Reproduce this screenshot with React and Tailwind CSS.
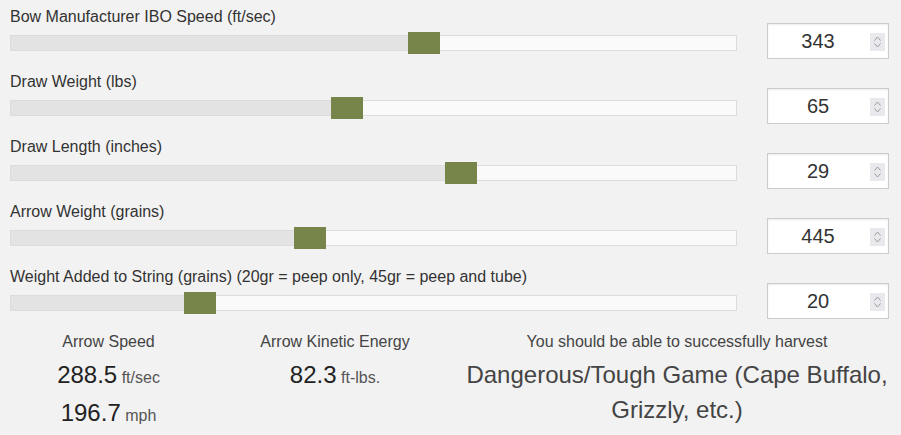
const sliders = [
  { label: 'Bow Manufacturer IBO Speed (ft/sec)', value: 343, thumb: 398 },
  { label: 'Draw Weight (lbs)', value: 65, thumb: 321 },
  { label: 'Draw Length (inches)', value: 29, thumb: 435 },
  { label: 'Arrow Weight (grains)', value: 445, thumb: 284 },
  { label: 'Weight Added to String (grains) (20gr = peep only, 45gr = peep and tube)', value: 20, thumb: 174 },
];

function Spinner() {
  return (
    <div className="absolute right-[3px] top-[9px] w-[15px] h-[18px] bg-[#e9e9ed] flex flex-col items-center justify-center gap-[2px]">
      <svg width="7" height="5" viewBox="0 0 7 5" fill="none" stroke="#9a9a9a" strokeWidth="1">
        <path d="M0.5 4.5 L3.5 1 L6.5 4.5" />
      </svg>
      <svg width="7" height="5" viewBox="0 0 7 5" fill="none" stroke="#9a9a9a" strokeWidth="1">
        <path d="M0.5 0.5 L3.5 4 L6.5 0.5" />
      </svg>
    </div>
  );
}

function SliderRow({ label, value, thumb }) {
  return (
    <div className="flex h-[65px] pl-[10px] pr-[12px]">
      <div className="w-[727px]">
        <div className="pt-[8px] text-[16px] leading-[18px] text-[#333]">{label}</div>
        <div className="relative mt-[9px] h-[16px] border border-[#dcdcdc] bg-[#fafafa] flex">
          <div className="h-full bg-[#e3e3e3]" style={{ width: thumb + 16 }} />
          <div className="absolute top-[-4px] w-[32px] h-[22px] bg-[#77844a]" style={{ left: thumb - 1 }} />
        </div>
      </div>
      <div className="relative ml-[30px] mt-[23px] w-[122px] h-[36px] border border-[#cccccc] bg-white shadow-[inset_0_1px_2px_rgba(0,0,0,0.08)]">
        <div className="pr-[20px] text-center text-[20px] leading-[34px] text-[#333]">{value}</div>
        <Spinner />
      </div>
    </div>
  );
}

export default function App() {
  return (
    <div className="w-[901px] h-[435px] bg-[#f2f2f2] overflow-hidden font-['Liberation_Sans',Arial,sans-serif]">
      {sliders.map((s) => (
        <SliderRow key={s.label} {...s} />
      ))}
      <div className="grid grid-cols-[217px_236px_1fr] pt-[7px] text-center">
        <div>
          <div className="text-[16px] leading-[20px] text-[#444]">Arrow Speed</div>
          <div className="mt-[5px] leading-[35px] text-[#222]">
            <span className="text-[24px]">288.5</span> <span className="text-[16px] text-[#555]">ft/sec</span>
          </div>
          <div className="leading-[35px] text-[#222]">
            <span className="text-[24px]">196.7</span> <span className="text-[16px] text-[#555]">mph</span>
          </div>
        </div>
        <div>
          <div className="text-[16px] leading-[20px] text-[#444]">Arrow Kinetic Energy</div>
          <div className="mt-[5px] leading-[35px] text-[#222]">
            <span className="text-[24px]">82.3</span> <span className="text-[16px] text-[#555]">ft-lbs.</span>
          </div>
        </div>
        <div className="px-[10px]">
          <div className="text-[16px] leading-[20px] text-[#444]">You should be able to successfully harvest</div>
          <div className="mt-[5px] text-[24px] leading-[35px] text-[#444]">
            Dangerous/Tough Game (Cape Buffalo, Grizzly, etc.)
          </div>
        </div>
      </div>
    </div>
  );
}
